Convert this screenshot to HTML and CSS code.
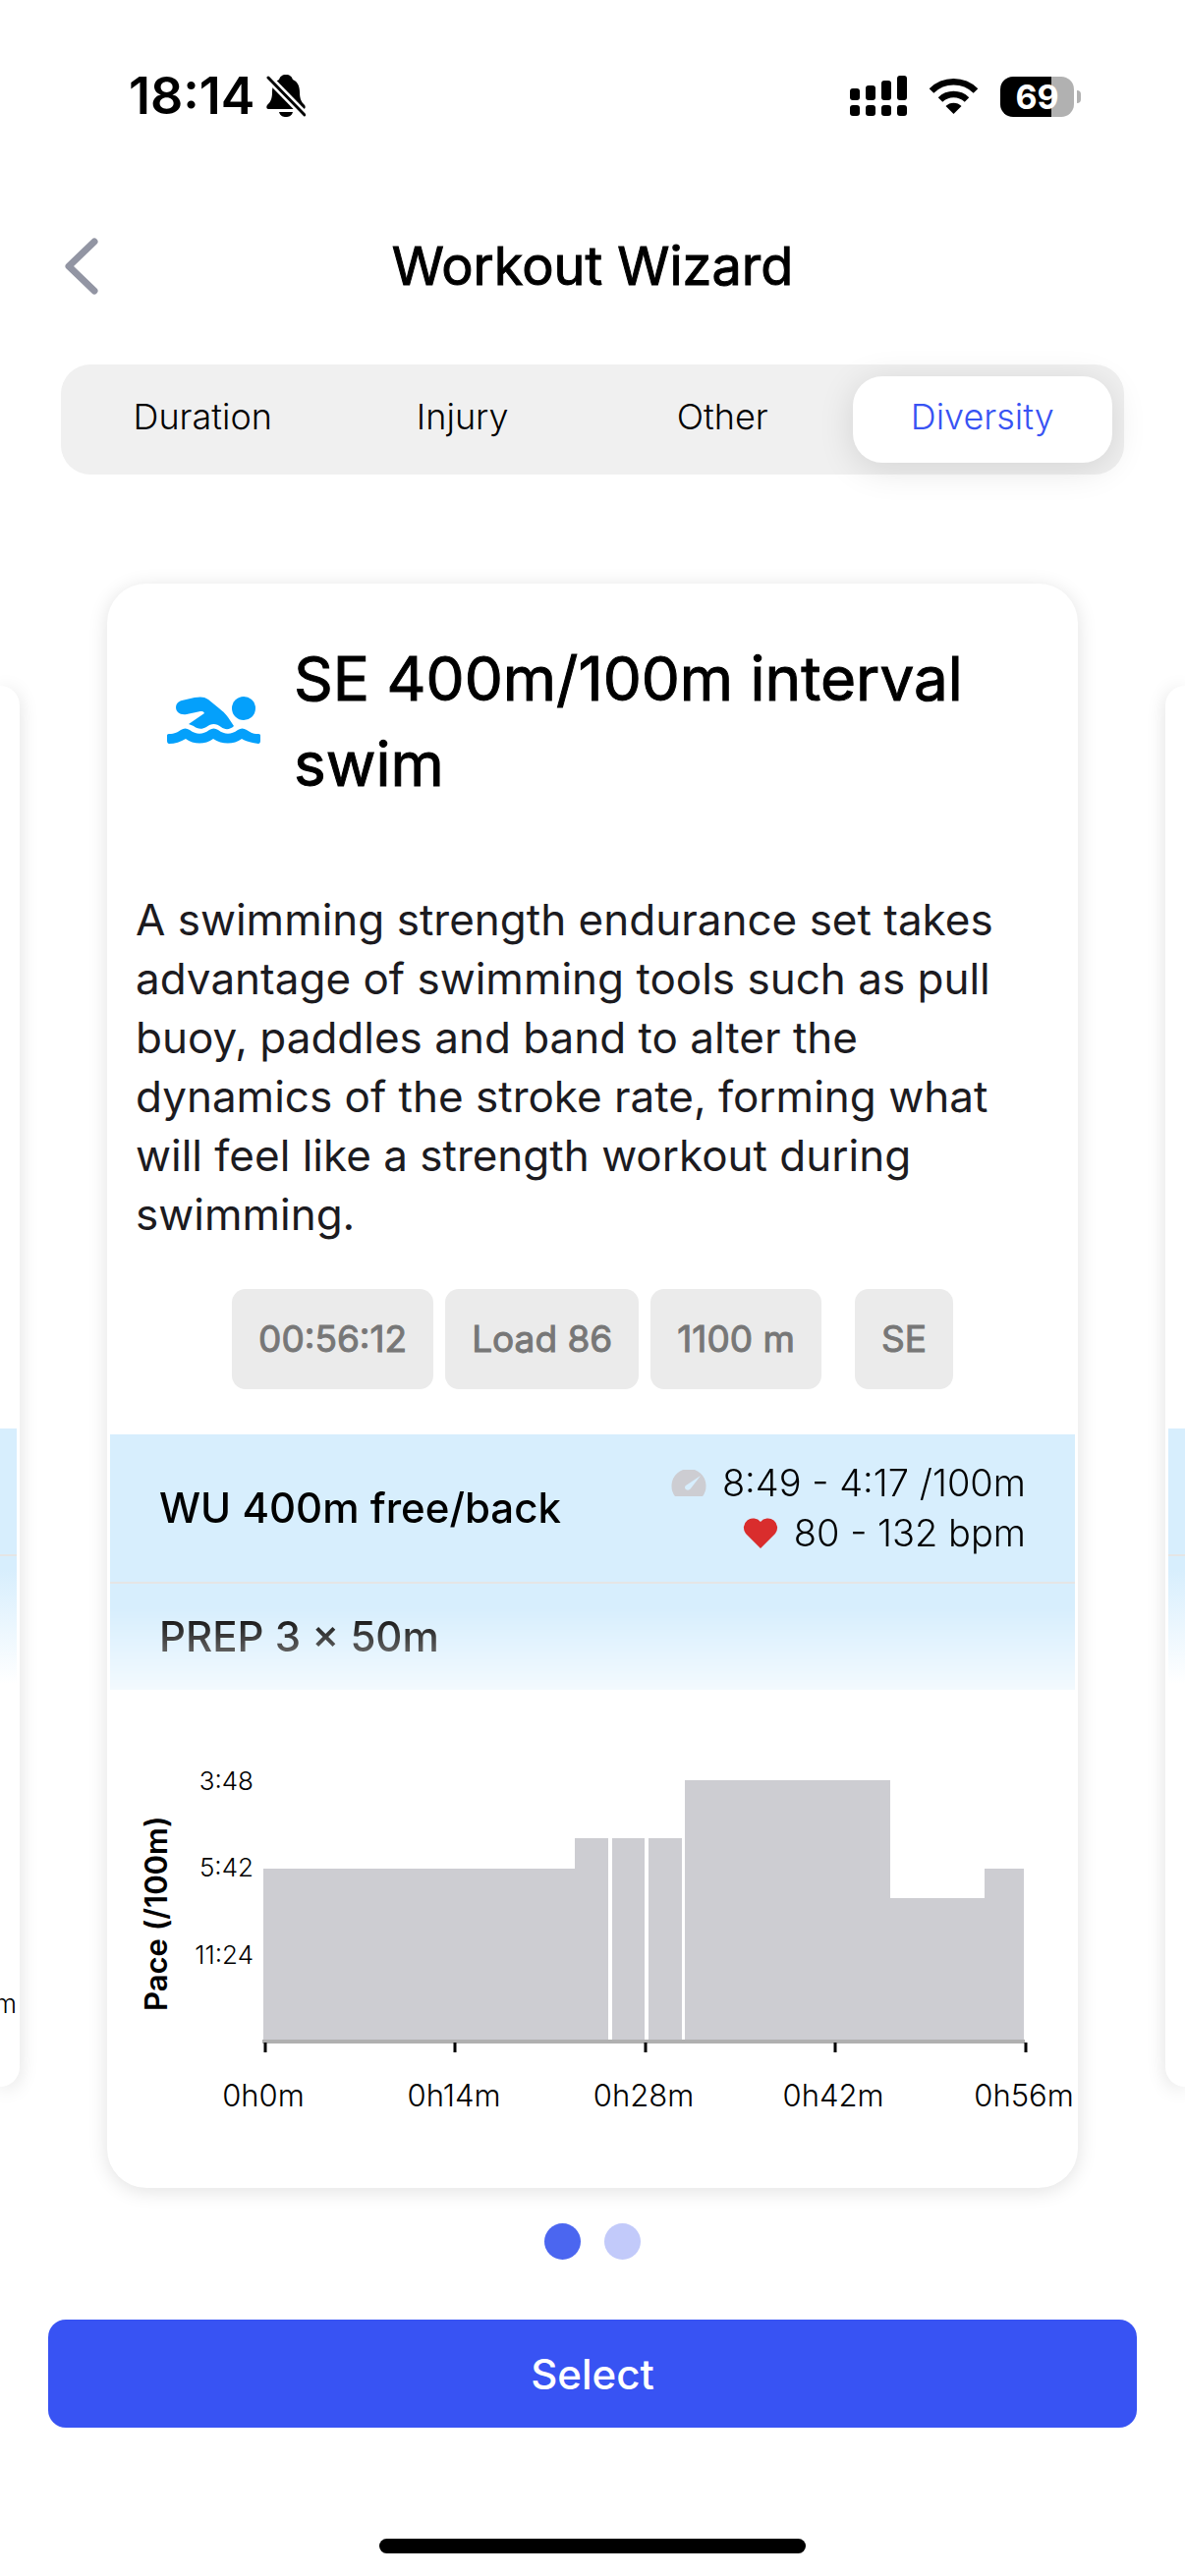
FILE: index.html
```html
<!DOCTYPE html>
<html lang="en">
<head>
    <meta charset="UTF-8">
    <meta name="viewport" content="width=device-width, initial-scale=1.0">
    <title>Workout Wizard</title>
    <link rel="stylesheet" href="styles.css">
</head>
<body>
    <div class="status-bar">
        <div class="status-left">
            <span class="time">18:14</span>
            <svg class="bell" viewBox="0 0 40 44">
                <path d="M20 0c4 0 6 2 7 5 5 2 7 7 7 13 0 7 2 10 5 13 1 1 1 4-1 4H2c-2 0-2-3-1-4 3-3 5-6 5-13 0-6 2-11 7-13 1-3 3-5 7-5zM13 38h14c-1 4-4 5-7 5s-6-1-7-5z"/>
                <path d="M2 3l37 38" stroke="#fff" stroke-width="8"/>
                <path d="M2 3l37 38" stroke="#000" stroke-width="3" stroke-linecap="round"/>
            </svg>
        </div>
        <div class="status-right">
            <svg class="signal" viewBox="0 0 58 42">
                <rect x="0" y="13" width="10" height="12" rx="3"/>
                <rect x="16" y="10" width="10" height="15" rx="3"/>
                <rect x="32" y="5" width="10" height="20" rx="3"/>
                <rect x="48" y="0" width="10" height="25" rx="3"/>
                <rect x="0" y="30" width="10" height="11" rx="3"/>
                <rect x="16" y="30" width="10" height="11" rx="3"/>
                <rect x="32" y="30" width="10" height="11" rx="3"/>
                <rect x="48" y="30" width="10" height="11" rx="3"/>
            </svg>
            <svg class="wifi" viewBox="0 0 51 38">
                <path d="M3 13.500a32 32 0 0 1 45 0M12 22.500a19.500 19.500 0 0 1 27 0" fill="none" stroke="#000" stroke-width="6.500"/>
                <path d="M25.500 37l-8-8c4-4.500 12-4.500 16 0z"/>
            </svg>
            <div class="battery"><span>69</span></div>
        </div>
    </div>

    <header>
        <button class="back" aria-label="Back">
            <svg viewBox="0 0 34 58"><path d="M30 4L4 29l26 25"/></svg>
        </button>
        <h1>Workout Wizard</h1>
    </header>

    <nav class="tabs">
        <button class="tab">Duration</button>
        <button class="tab">Injury</button>
        <button class="tab">Other</button>
        <button class="tab active">Diversity</button>
    </nav>

    <main class="carousel">
        <div class="side-card side-left">
            <div class="side-step"></div>
            <div class="side-step side-fade"></div>
            <span class="side-label">m</span>
        </div>

        <article class="card">
            <div class="card-title">
                <svg class="swimmer" viewBox="0 0 95 50">
                    <circle cx="78" cy="12" r="12"/>
                    <path d="M15 4L28 1C34 0 38 0 42 3L53 12C58 16 60 18 62 21L68 30C64 34 59 34 55 31C50 27 45 27 40 31C35 34 31 33 27 30L22 28L38 17C37 15 36 15 34 15L20 18C7 20 6 6 15 4z"/>
                    <path d="M2 38C8 38 11 36 14 34C17 32 20 32 23 34C30 39 36 39 43 34C46 32 49 32 52 34C59 39 65 39 72 34C75 32 78 32 81 34C85 37 89 38 93 38C95 38 95 39 95 40V45C95 47 94 48 93 48C87 47 81 46 76 43C68 49 56 49 47 43C39 49 27 49 19 43C14 46 8 48 2 48C1 48 0 47 0 45V40C0 39 0 38 2 38z"/>
                </svg>
                <h2>SE 400m/100m interval swim</h2>
            </div>

            <p class="description">A swimming strength endurance set takes advantage of swimming tools such as pull buoy, paddles and band to alter the dynamics of the stroke rate, forming what will feel like a strength workout during swimming.</p>

            <div class="chips">
                <span class="chip">00:56:12</span>
                <span class="chip">Load 86</span>
                <span class="chip">1100 m</span>
                <span class="chip chip-type">SE</span>
            </div>

            <div class="steps">
                <div class="step">
                    <span class="step-name">WU 400m free/back</span>
                    <div class="targets">
                        <div class="target">
                            <svg class="gauge" viewBox="0 0 36 28"><path fill="#cdcdd2" d="M4 27A17.500 17.500 0 1 1 32 27z"/><path fill="#d7eefd" d="M30 6L20 19c-3 4-8 0-5-3z"/></svg>
                            <span>8:49 - 4:17 /100m</span>
                        </div>
                        <div class="target">
                            <svg class="heart" viewBox="0 0 36 32"><path fill="#d92d2d" d="M18 31L3 16A9.600 9.600 0 0 1 18 4A9.600 9.600 0 0 1 33 16z"/></svg>
                            <span>80 - 132 bpm</span>
                        </div>
                    </div>
                </div>
                <div class="step">
                    <span class="step-name">PREP 3 × 50m</span>
                </div>
            </div>

            <svg class="chart" viewBox="0 0 982 504">
                <text class="y-title" transform="translate(58 327) rotate(-90)">Pace (/100m)</text>
                <g class="y-labels">
                    <text x="146" y="102">3:48</text>
                    <text x="146" y="190">5:42</text>
                    <text x="146" y="279">11:24</text>
                </g>
                <path class="area" d="M156 358V182H473V151H507V358zM511 358V151H544V358zM548 358V151H582V358zM585 358V92H794V212H890V182H930V358z"/>
                <path class="axis" d="M155 358H931"/>
                <path class="ticks" d="M158 359v10M351 359v10M545 359v10M738 359v10M932 359v10"/>
                <g class="x-labels">
                    <text x="156" y="424">0h0m</text>
                    <text x="350" y="424">0h14m</text>
                    <text x="543" y="424">0h28m</text>
                    <text x="736" y="424">0h42m</text>
                    <text x="930" y="424">0h56m</text>
                </g>
            </svg>
        </article>

        <div class="side-card side-right">
            <div class="side-step"></div>
            <div class="side-step side-fade"></div>
        </div>
    </main>

    <div class="dots">
        <span class="dot current"></span>
        <span class="dot"></span>
    </div>

    <button class="select">Select</button>
    <div class="home-indicator"></div>
</body>
</html>
```
FILE: styles.css
```css
* {
    box-sizing: border-box;
}
body {
    margin: 0;
    font-family: Inter, "Liberation Sans", sans-serif;
    background-color: #fff;
    color: #000;
    overflow-x: hidden;
}
button {
    font-family: inherit;
    border: none;
    padding: 0;
    cursor: pointer;
}
.status-bar {
    display: flex;
    justify-content: space-between;
    align-items: center;
    height: 120px;
    padding: 76px 106px 0 131px;
}
.status-left,
.status-right {
    display: flex;
    align-items: center;
}
.status-left {
    gap: 12px;
}
.status-right {
    gap: 22px;
}
.time {
    font-size: 52px;
    line-height: 44px;
    font-weight: 600;
}
.bell {
    width: 40px;
    height: 44px;
}
.signal {
    width: 58px;
    height: 42px;
}
.wifi {
    width: 51px;
    height: 38px;
}
.battery {
    position: relative;
    width: 75px;
    height: 41px;
    margin-right: 7px;
    border-radius: 13px;
    background: linear-gradient(to right, #000 69%, #b1b1b1 69%);
    color: #fff;
    font-size: 34px;
    font-weight: 700;
    line-height: 41px;
    text-align: center;
}
.battery::after {
    content: "";
    position: absolute;
    right: -7px;
    top: 14px;
    width: 4px;
    height: 13px;
    border-radius: 0 4px 4px 0;
    background-color: #b1b1b1;
}
header {
    display: grid;
    grid-template-columns: 100px 1fr 100px;
    align-items: center;
    height: 251px;
    padding-top: 50px;
}
.back {
    justify-self: end;
    height: 58px;
    background: none;
}
.back svg {
    display: block;
    width: 34px;
    height: 58px;
    fill: none;
    stroke: #9295a3;
    stroke-width: 7;
    stroke-linecap: round;
    stroke-linejoin: round;
}
h1,
h2 {
    margin: 0;
    font-weight: 400;
    -webkit-text-stroke: 1px #000;
}
h1 {
    font-size: 54px;
    line-height: 64px;
    text-align: center;
}
.tabs {
    display: grid;
    grid-template-columns: repeat(4, 1fr);
    margin: 0 62px;
    padding: 12px;
    border-radius: 30px;
    background-color: #f0f0f0;
}
.tab {
    height: 88px;
    padding-bottom: 6px;
    border-radius: 30px;
    background: none;
    font-size: 36px;
    font-weight: 300;
    color: #000;
}
.tab.active {
    background-color: #fff;
    color: #3853f3;
    box-shadow: 0 6px 36px rgba(0, 0, 0, 0.12);
}
.carousel {
    display: grid;
    grid-template-columns: 20px 1fr 20px;
    gap: 89px;
    margin-top: 111px;
}
.card,
.side-card {
    background-color: #fff;
    box-shadow: 0 3px 20px rgba(0, 0, 0, 0.12);
}
.card {
    padding: 3px;
    border-radius: 40px;
}
.side-card {
    align-self: center;
    height: 1426px;
    padding-top: 756px;
}
.side-left {
    padding-right: 3px;
    border-radius: 0 35px 35px 0;
}
.side-right {
    padding-left: 3px;
    border-radius: 35px 0 0 35px;
}
.side-step {
    height: 130px;
    background-color: #d7eefd;
    border-bottom: 2px solid #e5e5e5;
}
.side-fade {
    border: none;
    background: linear-gradient(#d7eefd 10%, #fff);
}
.side-label {
    display: flex;
    justify-content: flex-end;
    margin-top: 310px;
    font-size: 26px;
    line-height: 32px;
    font-weight: 300;
}
.card-title {
    display: flex;
    align-items: center;
    gap: 34px;
    padding: 50px 58px 0;
}
.swimmer {
    flex: none;
    width: 95px;
    height: 50px;
    fill: #04a0fb;
}
h2 {
    font-size: 62px;
    line-height: 87px;
}
.description {
    margin: 85px 36px 0 26px;
    font-size: 44px;
    line-height: 60px;
    color: #1c1b1f;
}
.chips {
    display: flex;
    justify-content: center;
    gap: 12px;
    margin-top: 46px;
}
.chip {
    padding: 0 27px;
    border-radius: 14px;
    background-color: #ebebeb;
    color: #777;
    font-size: 37px;
    line-height: 102px;
    -webkit-text-stroke: 1px #777;
}
.chip-type {
    margin-left: 22px;
}
.steps {
    margin-top: 46px;
    height: 260px;
    overflow: hidden;
    background-color: #d7eefd;
    mask-image: linear-gradient(#000 68%, rgba(0, 0, 0, 0.3));
}
.step {
    display: flex;
    justify-content: space-between;
    align-items: center;
    padding: 24px 50px;
    border-bottom: 2px solid #e5e5e5;
}
.step-name {
    font-size: 42px;
    line-height: 60px;
    font-weight: 500;
}
.target {
    display: flex;
    justify-content: flex-end;
    align-items: center;
    gap: 16px;
    font-size: 38px;
    line-height: 51px;
    font-weight: 300;
}
.gauge {
    width: 36px;
    height: 28px;
}
.heart {
    width: 36px;
    height: 32px;
}
.chart {
    display: block;
    width: 100%;
}
.y-title {
    font-size: 31px;
    font-weight: 600;
}
.y-labels {
    font-size: 26px;
    font-weight: 300;
    text-anchor: end;
}
.x-labels {
    font-size: 31px;
    font-weight: 300;
    text-anchor: middle;
}
.area {
    fill: #cdcdd2;
}
.axis {
    stroke: #b0b0b0;
    stroke-width: 4;
}
.ticks {
    stroke: #000;
    stroke-width: 3;
}
.dots {
    display: flex;
    justify-content: center;
    gap: 24px;
    margin-top: 36px;
}
.dot {
    width: 37px;
    height: 37px;
    border-radius: 50%;
    background-color: #c2cafa;
}
.dot.current {
    background-color: #4b66f0;
}
.select {
    display: block;
    width: calc(100% - 98px);
    height: 110px;
    margin: 61px auto 0;
    border-radius: 18px;
    background-color: #3853f3;
    color: #fff;
    font-size: 42px;
    font-weight: 500;
}
.home-indicator {
    width: 36%;
    height: 15px;
    margin: 113px auto 0;
    border-radius: 8px;
    background-color: #000;
}
```
